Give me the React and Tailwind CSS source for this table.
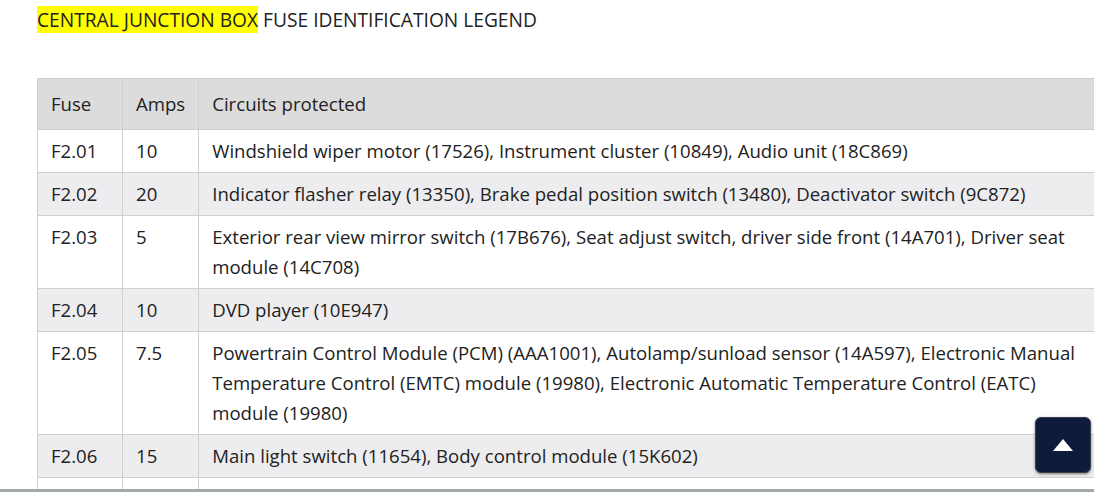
const rows = [
  { fuse: 'F2.01', amps: '10', circuits: 'Windshield wiper motor (17526), Instrument cluster (10849), Audio unit (18C869)' },
  { fuse: 'F2.02', amps: '20', circuits: 'Indicator flasher relay (13350), Brake pedal position switch (13480), Deactivator switch (9C872)' },
  { fuse: 'F2.03', amps: '5', circuits: 'Exterior rear view mirror switch (17B676), Seat adjust switch, driver side front (14A701), Driver seat module (14C708)' },
  { fuse: 'F2.04', amps: '10', circuits: 'DVD player (10E947)' },
  { fuse: 'F2.05', amps: '7.5', circuits: 'Powertrain Control Module (PCM) (AAA1001), Autolamp/sunload sensor (14A597), Electronic Manual Temperature Control (EMTC) module (19980), Electronic Automatic Temperature Control (EATC) module (19980)' },
  { fuse: 'F2.06', amps: '15', circuits: 'Main light switch (11654), Body control module (15K602)' },
]

export default function App() {
  return (
    <div className="relative h-[492px] w-[1094px] overflow-hidden bg-white font-['Open_Sans',sans-serif] text-[#222]">
      <div className="pl-[37px] pt-[8px]">
        <p className="text-[19.2px] leading-[24px]">
          <span className="bg-[#ffff00]">CENTRAL JUNCTION BOX</span> FUSE IDENTIFICATION LEGEND
        </p>

        <table className="mt-[46px] w-[1075px] border-collapse text-[18.6px] leading-[30px]">
          <thead>
            <tr className="bg-[#dcdcdc]">
              <th className="w-[85px] border border-[#cfcfcf] px-[13px] py-[10px] text-left font-normal">Fuse</th>
              <th className="w-[76px] border border-[#cfcfcf] px-[13px] py-[10px] text-left font-normal">Amps</th>
              <th className="border border-[#cfcfcf] px-[13px] py-[10px] text-left font-normal">Circuits protected</th>
            </tr>
          </thead>
          <tbody>
            {rows.map((r, i) => (
              <tr key={r.fuse} className={i % 2 ? 'bg-[#ededef]' : 'bg-white'}>
                <td className="border border-[#cfcfcf] px-[13px] py-[6px] align-top">{r.fuse}</td>
                <td className="border border-[#cfcfcf] px-[13px] py-[6px] align-top">{r.amps}</td>
                <td className="border border-[#cfcfcf] px-[13px] py-[6px] pr-[16px] align-top">{r.circuits}</td>
              </tr>
            ))}
            {/* next row, scrolled below the fold */}
            <tr className="h-[42px] bg-white">
              <td className="border border-[#cfcfcf]" />
              <td className="border border-[#cfcfcf]" />
              <td className="border border-[#cfcfcf]" />
            </tr>
          </tbody>
        </table>
      </div>

      {/* back to top */}
      <button className="absolute left-[1035px] top-[417px] flex h-[56px] w-[56px] items-center justify-center rounded-[6px] border border-[#3a3f4a] bg-[#0e1b3d] shadow-[0_1px_3px_rgba(0,0,0,0.5)]">
        <svg width="20" height="12" viewBox="0 0 20 12">
          <polygon points="10,0 20,12 0,12" fill="#fff" />
        </svg>
      </button>

      <div className="absolute bottom-0 left-0 h-[3px] w-full bg-[#a3a8ab]" />
    </div>
  )
}
